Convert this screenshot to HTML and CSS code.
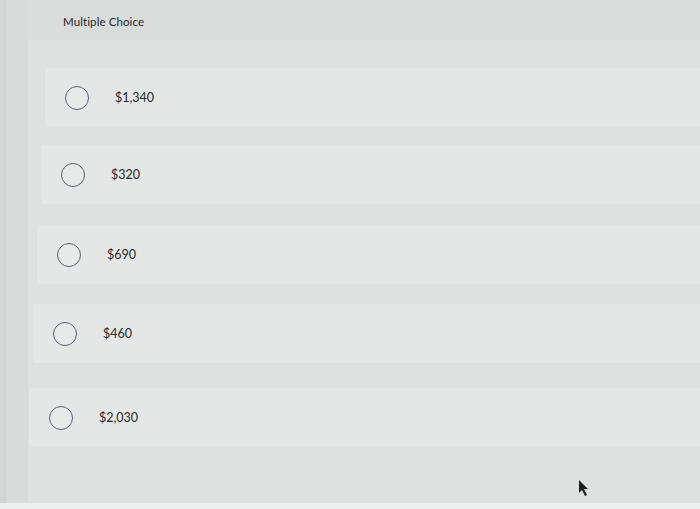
FILE: index.html
```html
<!DOCTYPE html>
<html>
<head>
<meta charset="utf-8">
<link rel="stylesheet" href="styles.css">
</head>
<body>
<div class="screen">
  <div class="side"></div>
  <div class="main">
    <div class="header"><span class="title">Multiple Choice</span></div>
    <div class="options">
      <div class="opt o1"><span class="radio"></span><span class="label">$1,340</span></div>
      <div class="opt o2"><span class="radio"></span><span class="label">$320</span></div>
      <div class="opt o3"><span class="radio"></span><span class="label">$690</span></div>
      <div class="opt o4"><span class="radio"></span><span class="label">$460</span></div>
      <div class="opt o5"><span class="radio"></span><span class="label">$2,030</span></div>
    </div>
  </div>
</div>
<div class="bottom"></div>
<svg class="cursor" width="14" height="18" viewBox="0 0 14 18"><path d="M2 1 L2 14 L5 11 L8 17 L10 16 L7 10 L11 10 Z" fill="#1e1f22"/></svg>
</body>
</html>
```

FILE: styles.css
```css
html, body {
  margin: 0;
  padding: 0;
}
body {
  width: 700px;
  height: 509px;
  overflow: hidden;
  background: #dcdfde;
  font-family: Lato, "Open Sans", sans-serif;
  color: #25272c;
  position: relative;
}
.screen {
  display: flex;
  height: 503px;
}
.side {
  width: 28px;
  flex: none;
  background: linear-gradient(to right, #d3d7d6 0, #d3d7d6 4px, #c9cdcc 5px, #d7dbda 6px, #d7dbda 100%);
}
.main {
  flex: 1;
  display: flex;
  flex-direction: column;
  background: #dee1e0;
}
.header {
  height: 40px;
  background: #d9dcdb;
  padding-left: 35px;
  display: flex;
  align-items: center;
  flex: none;
}
.title {
  font-size: 11.5px;
  letter-spacing: 0.1px;
  color: #25272c;
  margin-top: 3px;
}
.options {
  display: flex;
  flex-direction: column;
  padding-top: 28px;
}
.opt {
  height: 59px;
  background: #e5e7e6;
  display: flex;
  align-items: center;
  padding-left: 20px;
}
.o1 { margin-left: 17px; }
.o2 { margin-left: 13px; margin-top: 18px; }
.o3 { margin-left: 9px; margin-top: 21px; }
.o4 { margin-left: 5px; margin-top: 20px; }
.o5 { margin-left: 1px; margin-top: 25px; }
.radio {
  width: 22px;
  height: 22px;
  border: 1.5px solid #5a6072;
  border-radius: 50%;
  flex: none;
  background: #e8eae9;
}
.label {
  margin-left: 26px;
  font-size: 12.5px;
  color: #25272c;
}
.bottom {
  height: 6px;
  background: #eef0ef;
}
.cursor {
  position: absolute;
  left: 577px;
  top: 479px;
}
```
